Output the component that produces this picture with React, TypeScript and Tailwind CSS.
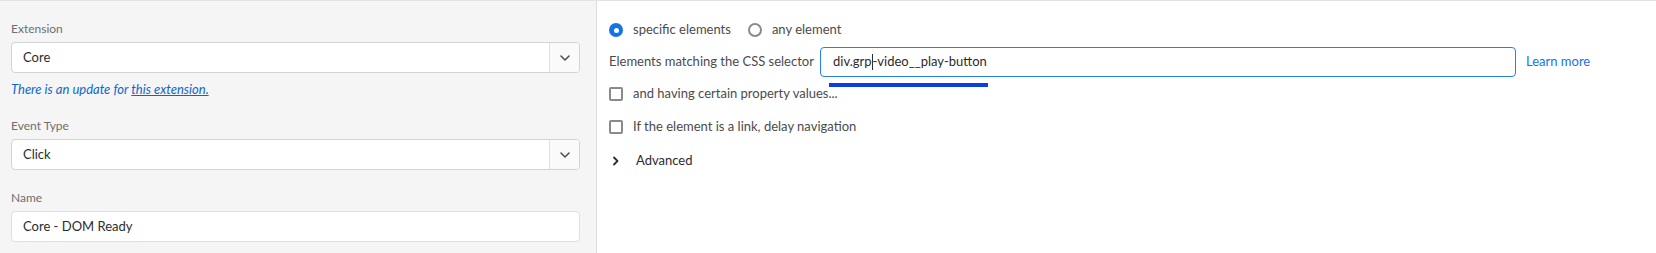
function Chevron() {
  return (
    <svg width="10" height="6" viewBox="0 0 10 6">
      <path d="M1 1l4 4 4-4" fill="none" stroke="#4b4b4b" strokeWidth="1.5" strokeLinecap="round" strokeLinejoin="round" />
    </svg>
  );
}

function FieldLabel({ text }: { text: string }) {
  return <div className="h-4 text-[12px] leading-4 text-[#6e6e6e]">{text}</div>;
}

function Select({ value }: { value: string }) {
  return (
    <div className="mt-[5px] flex h-[31px] w-[569px] overflow-hidden rounded-[4px] border border-[#d3d3d3] bg-white">
      <div className="flex flex-1 items-center pl-[11px] text-[13px] text-[#2c2c2c]">{value}</div>
      <div className="flex w-[30px] items-center justify-center border-l border-[#e1e1e1] bg-[#fafafa]">
        <Chevron />
      </div>
    </div>
  );
}

function Checkbox({ label }: { label: string }) {
  return (
    <div className="flex h-6 items-center">
      <span className="h-[14px] w-[14px] rounded-[2px] border-2 border-[#8a8a8a] bg-white" />
      <span className="ml-[10px] text-[#4b4b4b]">{label}</span>
    </div>
  );
}

export default function App() {
  return (
    <div className="flex h-[253px] w-[1656px] border-t border-[#e3e3e3] bg-white font-['Lato',sans-serif]">
      {/* left: extension / event type / name */}
      <div className="w-[597px] shrink-0 border-r border-[#dcdcdc] bg-[#f5f5f5] pl-[11px] pt-[20px]">
        <FieldLabel text="Extension" />
        <Select value="Core" />
        <div className="mt-[8px] h-4 text-[13px] italic leading-4 text-[#0d66d0]">
          There is an update for <span className="underline">this extension.</span>
        </div>

        <div className="mt-[21px]">
          <FieldLabel text="Event Type" />
          <Select value="Click" />
        </div>

        <div className="mt-[20px]">
          <FieldLabel text="Name" />
          <div className="mt-[5px] flex h-[31px] w-[569px] items-center rounded-[4px] border border-[#dedede] bg-white pl-[11px] text-[13px] text-[#2c2c2c]">
            Core - DOM Ready
          </div>
        </div>
      </div>

      {/* right: element settings */}
      <div className="flex-1 pl-[12px] pt-[17px] text-[13px] text-[#4b4b4b]">
        <div className="flex h-6 items-center">
          <span className="flex h-[14px] w-[14px] items-center justify-center rounded-full bg-[#1473e6]">
            <span className="h-[5px] w-[5px] rounded-full bg-white" />
          </span>
          <span className="ml-[10px]">specific elements</span>
          <span className="ml-[17px] h-[14px] w-[14px] rounded-full border-2 border-[#8a8a8a]" />
          <span className="ml-[10px]">any element</span>
        </div>

        <div className="mt-[5px] flex h-[30px] items-center">
          <span className="w-[211px] shrink-0">Elements matching the CSS selector</span>
          <div className="relative flex h-[30px] w-[696px] items-center rounded-[4px] border border-[#2680eb] bg-white pl-[12px] text-[#2c2c2c]">
            <span>div.grp</span>
            <span className="h-[16px] w-px bg-[#2c2c2c]" />
            <span>-video__play-button</span>
            <span className="absolute left-[8px] top-[35px] h-[4px] w-[159px] bg-[#0b3fe3]" />
          </div>
          <span className="ml-[10px] text-[#1473e6]">Learn more</span>
        </div>

        <div className="mt-[5px]">
          <Checkbox label="and having certain property values..." />
        </div>
        <div className="mt-[9px]">
          <Checkbox label="If the element is a link, delay navigation" />
        </div>

        <div className="mt-[10px] flex h-6 items-center text-[#2c2c2c]">
          <svg width="14" height="10" viewBox="0 0 14 10" className="ml-[2px]">
            <path d="M3 1.5l3.5 3.5-3.5 3.5" fill="none" stroke="#2c2c2c" strokeWidth="1.8" strokeLinecap="round" strokeLinejoin="round" />
          </svg>
          <span className="ml-[11px]">Advanced</span>
        </div>
      </div>
    </div>
  );
}
